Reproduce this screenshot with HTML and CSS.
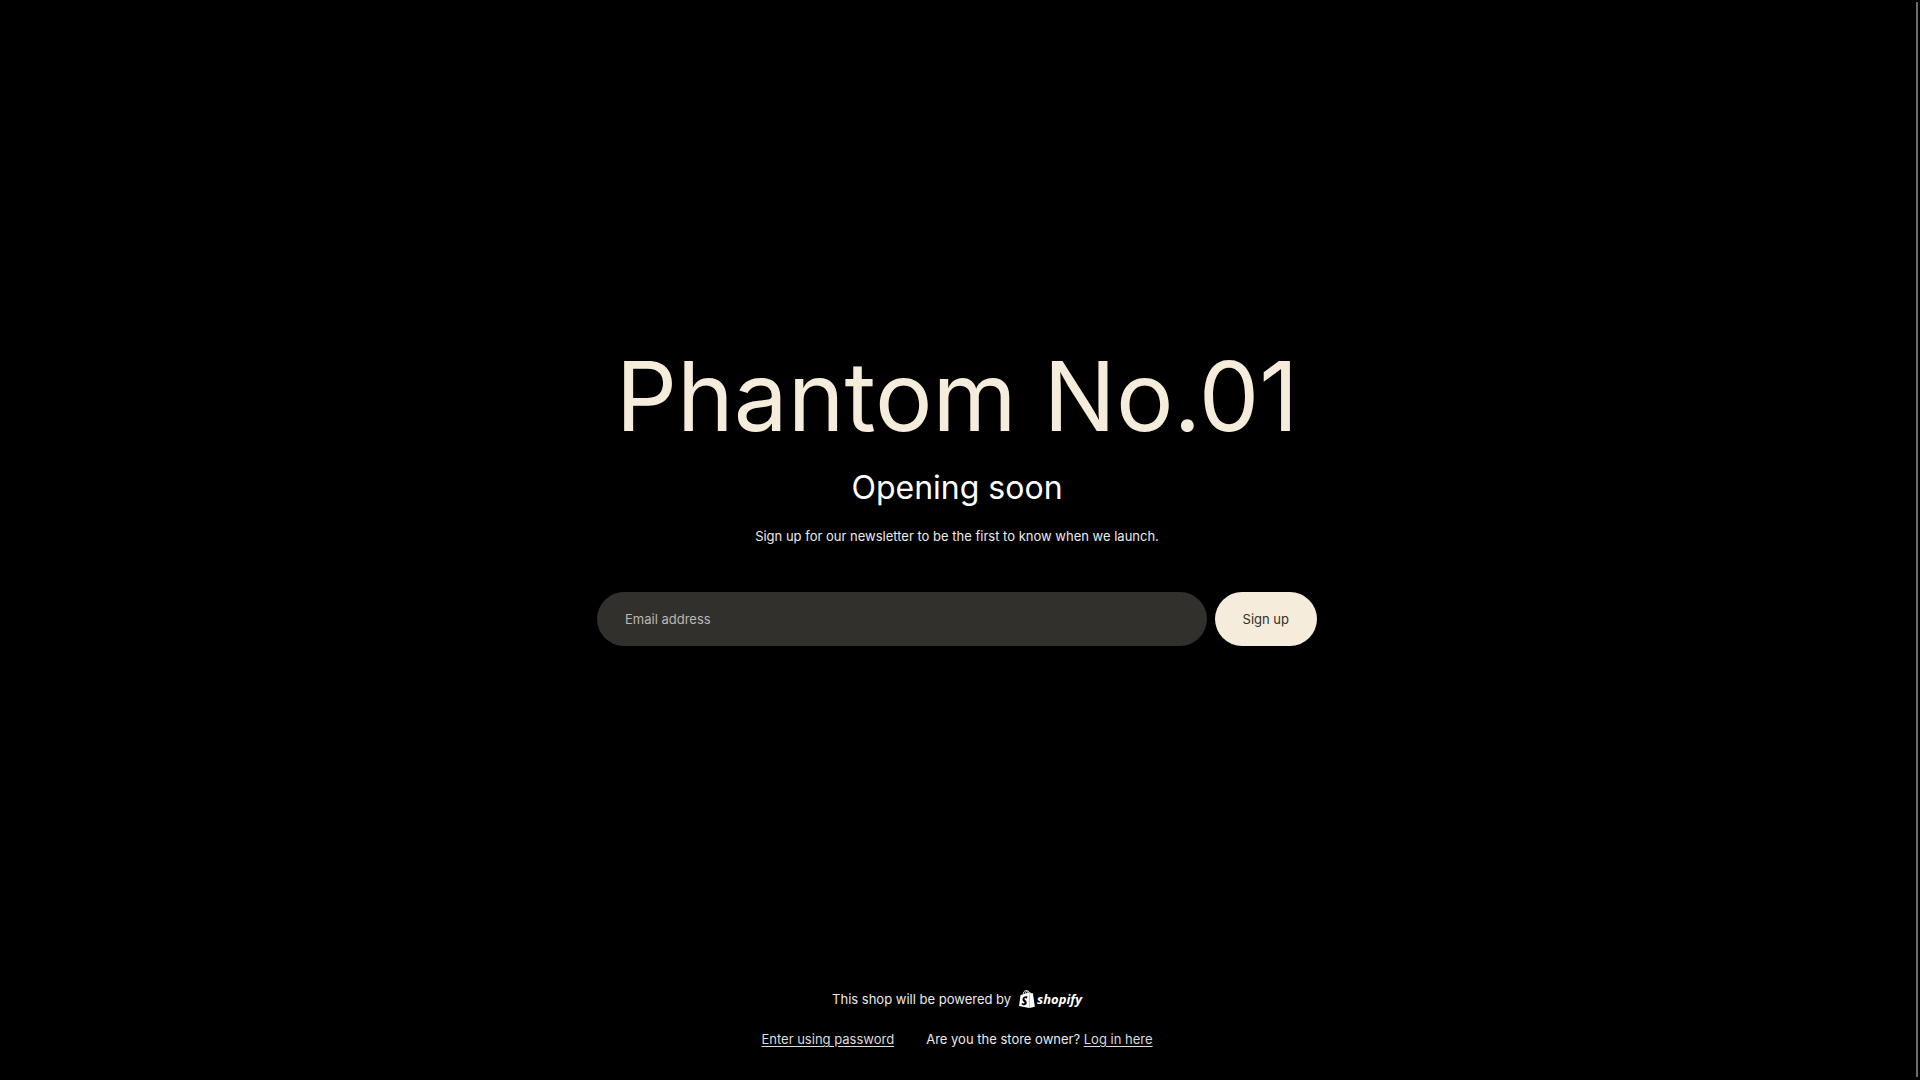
FILE: index.html
```html
<!DOCTYPE html>
<html lang="en">
<head>
<meta charset="utf-8">
<meta name="viewport" content="width=device-width, initial-scale=1">
<title>Phantom No.01</title>
<link rel="stylesheet" href="styles.css">
</head>
<body>
<main class="hero">
  <h1 class="shop-name">Phantom No.01</h1>
  <h2 class="status">Opening soon</h2>
  <p class="intro">Sign up for our newsletter to be the first to know when we launch.</p>
  <form class="signup">
    <input class="signup-email" type="email" placeholder="Email address" aria-label="Email address">
    <button class="signup-button" type="submit">Sign up</button>
  </form>
</main>
<footer class="footer">
  <div class="powered">
    <span>This shop will be powered by</span>
    <a class="brand" href="#" aria-label="Shopify">
      <svg class="brand-bag" viewBox="1.4 0 21.2 24" aria-hidden="true">
        <path fill="currentColor" d="M15.337 23.979l7.216-1.561s-2.604-17.613-2.625-17.73c-.018-.116-.114-.192-.211-.192s-1.929-.136-1.929-.136-1.275-1.274-1.439-1.411c-.045-.037-.075-.057-.121-.074l-.914 21.104h.023zM11.71 11.305s-.81-.424-1.774-.424c-1.447 0-1.504.906-1.504 1.141 0 1.232 3.24 1.715 3.24 4.629 0 2.295-1.44 3.76-3.406 3.76-2.354 0-3.54-1.465-3.54-1.465l.646-2.086s1.245 1.066 2.28 1.066c.675 0 .975-.545.975-.932 0-1.619-2.654-1.694-2.654-4.359-.034-2.237 1.571-4.416 4.827-4.416 1.257 0 1.875.361 1.875.361l-.945 2.715-.02.01zM11.17.83c.136 0 .271.038.405.135-.984.465-2.064 1.639-2.508 3.992-.656.213-1.293.405-1.889.578C7.697 3.75 8.951.84 11.17.84V.83zm1.235 2.949v.135c-.754.232-1.583.484-2.394.736.466-1.777 1.333-2.645 2.085-2.971.193.501.309 1.176.309 2.1zm.539-2.234c.694.074 1.141.867 1.429 1.755-.349.114-.735.231-1.158.366v-.252c0-.752-.096-1.371-.271-1.871v.002zm2.992 1.289c-.02 0-.06.021-.078.021s-.289.075-.714.21c-.423-1.233-1.176-2.37-2.508-2.37h-.115C12.135.209 11.669 0 11.265 0 8.159 0 6.675 3.877 6.21 5.846c-1.194.365-2.063.636-2.16.674-.675.213-.694.232-.772.87-.075.462-1.83 14.063-1.83 14.063L15.009 24l.927-21.166z"/>
      </svg>
      <span class="brand-name">shopify</span>
    </a>
  </div>
  <div class="access">
    <a class="link" href="#">Enter using password</a>
    <span>Are you the store owner? <a class="link" href="#">Log in here</a></span>
  </div>
</footer>
<div class="scroll-thumb" aria-hidden="true"></div>
</body>
</html>
```
FILE: styles.css
```css
* {
  box-sizing: border-box;
}

body {
  display: flex;
  flex-direction: column;
  min-height: 100vh;
  margin: 0;
  padding-right: 6px;
  background: #000;
  color: #ebebeb;
  font: 13px/20px Inter, "Liberation Sans", sans-serif;
}

h1,
h2,
p {
  margin: 0;
  font-weight: 400;
}

.hero {
  flex: 1;
  display: flex;
  flex-direction: column;
  align-items: center;
  justify-content: center;
  padding: 4px 24px 0;
  text-align: center;
}

.shop-name {
  margin-bottom: 24px;
  color: #f6ecdc;
  font-size: 96px;
  line-height: 96px;
}

.status {
  margin-bottom: 18px;
  color: #fff;
  font-size: 32px;
  line-height: 40px;
}

.intro {
  margin-bottom: 46px;
}

.signup {
  display: flex;
  gap: 8px;
  width: 100%;
  max-width: 720px;
}

.signup-email,
.signup-button {
  height: 54px;
  padding: 0 28px;
  border: 0;
  border-radius: 27px;
  font: inherit;
}

.signup-email {
  flex: 1;
  min-width: 0;
  background: #31302c;
  color: #fff;
}

.signup-email::placeholder {
  color: #b9b8b4;
  opacity: 1;
}

.signup-button {
  background: #f6ecdc;
  color: #31302c;
  cursor: pointer;
}

.footer {
  display: flex;
  flex-direction: column;
  align-items: center;
  gap: 20px;
  padding: 0 24px 31px;
}

.powered {
  display: flex;
  align-items: center;
  gap: 8px;
}

.brand {
  display: flex;
  align-items: center;
  gap: 2px;
  color: #fff;
  text-decoration: none;
}

.brand-bag {
  width: 16px;
  height: 18px;
}

.brand-name {
  font: italic 700 13px/20px "Open Sans", "Noto Sans", sans-serif;
}

.access {
  display: flex;
  flex-wrap: wrap;
  justify-content: center;
  gap: 0 32px;
}

.link {
  color: #dcdcdc;
  text-decoration: underline;
  text-underline-offset: 2px;
}

.scroll-thumb {
  position: fixed;
  top: 2px;
  right: 2px;
  bottom: 3px;
  width: 2px;
  background: #6b6b6b;
}
```
